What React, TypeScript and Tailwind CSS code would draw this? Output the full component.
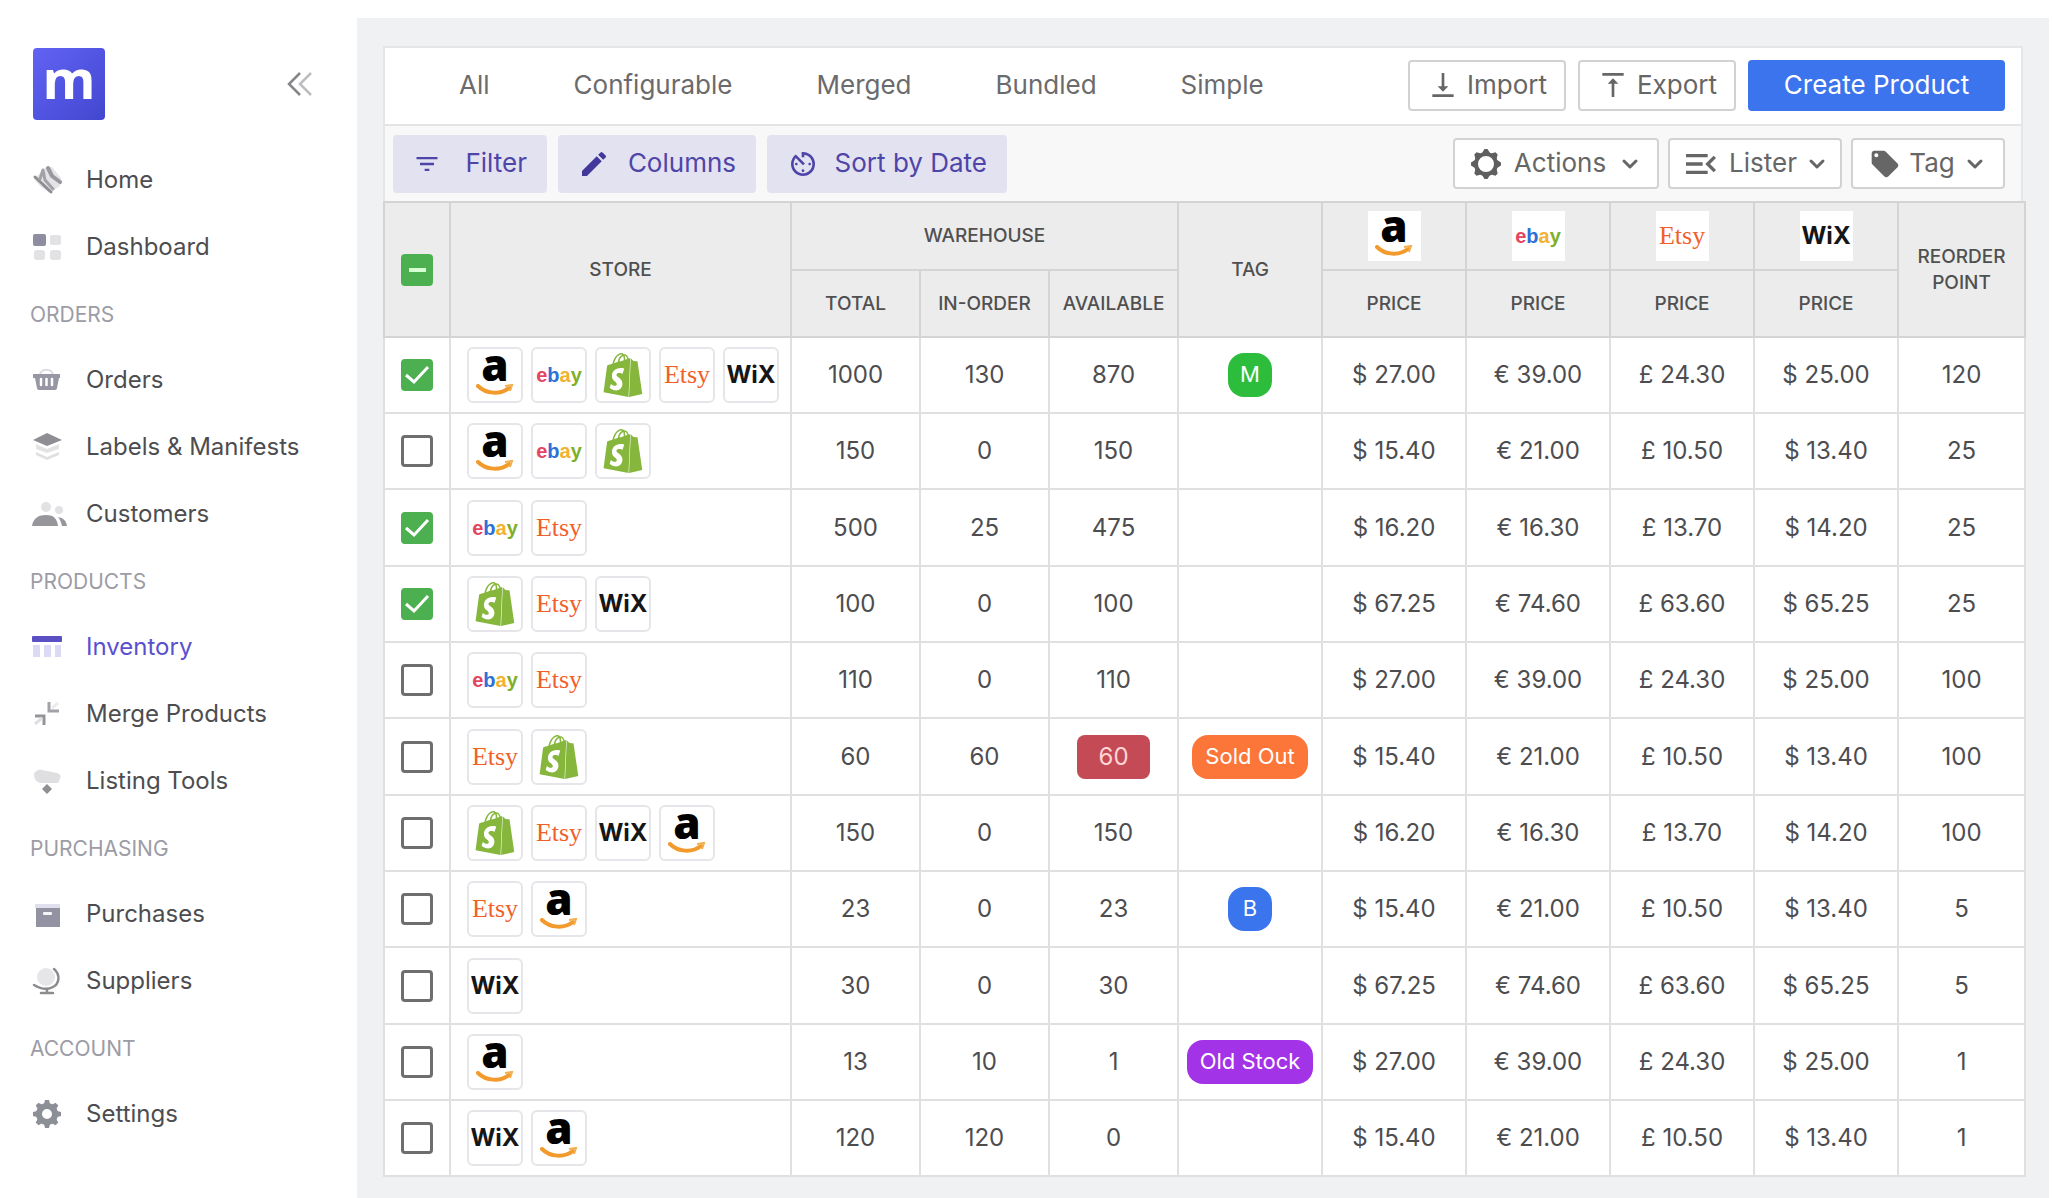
import React, { useEffect, useRef, useState } from "react";
import {
  MdAvTimer,
  MdEdit,
  MdFilterList,
  MdLocalOffer,
  MdMenuOpen,
  MdVerticalAlignBottom,
  MdVerticalAlignTop,
} from "react-icons/md";
import { SiShopify } from "react-icons/si";
import { ChevronDown } from "lucide-react";

type Store = "amazon" | "ebay" | "shopify" | "etsy" | "wix";

/* ---------- sidebar icons ---------- */

const HomeIcon = () => (
  <svg viewBox="0 0 30 30" className="size-[30px]" fill="none" aria-hidden="true">
    <path d="M13 3 20 2 29 13 28 21 18 28 9 22 2 14Z" fill="#e4e4e7" />
    <path d="M3 12 19 27" stroke="#8d8d92" strokeWidth="3" strokeLinecap="round" />
    <path d="M8 14 11 5 13 15 21 24" stroke="#a2a2a6" strokeWidth="3" strokeLinecap="round" strokeLinejoin="round" />
    <path d="M16 3 20 11 28 17" stroke="#98989d" strokeWidth="4" strokeLinecap="round" strokeLinejoin="round" />
  </svg>
);
const DashboardIcon = () => (
  <svg viewBox="0 0 30 30" className="size-[30px]" aria-hidden="true">
    <rect x="1" y="2" width="13" height="12" rx="2" fill="#8f8da0" />
    <rect x="18" y="3" width="11" height="10" rx="2" fill="#e2e2e5" />
    <rect x="2" y="18" width="11" height="10" rx="3" fill="#e2e2e5" />
    <rect x="18" y="18" width="11" height="10" rx="3" fill="#e2e2e5" />
  </svg>
);
const BasketIcon = () => (
  <svg viewBox="0 0 30 30" className="size-[30px]" fill="none" aria-hidden="true">
    <path d="M8 10C9 3 20 3 21 10" stroke="#dcdce3" strokeWidth="2" />
    <path d="M1 9h27v4h-1l-2 10a2 2 0 0 1-2 2H7a2 2 0 0 1-2-2L3 13H1Z" fill="#9797a3" />
    <path d="M9 14v6M14.500 14v6M20 14v6" stroke="#fff" strokeWidth="2.500" strokeLinecap="round" />
  </svg>
);
const LayersIcon = () => (
  <svg viewBox="0 0 30 30" className="size-[30px]" aria-hidden="true">
    <path d="M15 1 30 8 15 14 1 8Z" fill="#8e8e94" />
    <path d="M4 12 15 17 27 12V17L15 21 4 17Z" fill="#e3e3e6" />
    <path d="M4 20 15 25 27 20V23L15 28 4 23Z" fill="#e0e0e3" />
  </svg>
);
const PeopleIcon = () => (
  <svg viewBox="0 0 36 30" className="h-[30px] w-9" aria-hidden="true">
    <circle cx="14" cy="8" r="5" fill="#e2e2e5" />
    <circle cx="27" cy="11" r="4" fill="#e2e2e5" />
    <path d="M0 27C1 19 7 16 14 16S25 19 26 27Z" fill="#96969b" />
    <path d="M26 18C31 19 34 21 35 27H30C29 23 28 20 26 18Z" fill="#96969b" />
  </svg>
);
const InventoryIcon = () => (
  <svg viewBox="0 0 30 30" className="size-[30px]" aria-hidden="true">
    <rect x="0" y="4" width="30" height="6" rx="1" fill="#5b4fc4" />
    <path d="M1 13h7v12H1ZM12 13h7v12h-7ZM23 13h6v12h-6Z" fill="#dcd9f7" />
  </svg>
);
const MergeIcon = () => (
  <svg viewBox="0 0 30 30" className="size-[30px]" fill="none" aria-hidden="true">
    <path d="M3 17h9v9" stroke="#94949a" strokeWidth="3" />
    <path d="M3 25 10 19" stroke="#e0e0e3" strokeWidth="3" />
    <path d="M17 3v9h10" stroke="#a2a2a8" strokeWidth="3" />
    <path d="M26 4 20 9" stroke="#ececee" strokeWidth="3" />
  </svg>
);
const ListingIcon = () => (
  <svg viewBox="0 0 30 30" className="size-[30px]" aria-hidden="true">
    <path d="M2 9C2 5 7 3 10 4L25 7C29 8 29 11 28 13L26 17H9C5 17 2 13 2 9Z" fill="#dfdfe1" />
    <path d="M15 18 20 23 15 28 10 23Z" fill="#8f8f93" />
  </svg>
);
const BoxIcon = () => (
  <svg viewBox="0 0 30 30" className="size-[30px]" aria-hidden="true">
    <rect x="3" y="5" width="25" height="4" fill="#e0dfee" />
    <path d="M4 9h24v19H4Z" fill="#9392a3" />
    <rect x="11" y="13" width="9" height="3" rx="1" fill="#f4f4f8" />
  </svg>
);
const GlobeIcon = () => (
  <svg viewBox="0 0 30 30" className="size-[30px]" fill="none" aria-hidden="true">
    <circle cx="14" cy="11" r="9" fill="#e6e6e8" />
    <path d="M22 3C29 9 27 18 21 21C14 25 7 22 2 19" stroke="#8b8b90" strokeWidth="2.500" strokeLinecap="round" />
    <path d="M9 27h12M15 23v4" stroke="#8b8b90" strokeWidth="2.500" strokeLinecap="round" />
  </svg>
);
const GearIcon = () => (
  <svg viewBox="0 0 30 30" className="size-[30px]" fill="none" aria-hidden="true">
    <circle cx="15" cy="15" r="8" stroke="#8c8f96" strokeWidth="6" />
    <g fill="#8c8f96">
      {[0, 45, 90, 135, 180, 225, 270, 315].map((a) => (
        <path key={a} d="M12 5 13 1h4l1 4Z" transform={`rotate(${a} 15 15)`} />
      ))}
    </g>
  </svg>
);
const CogOutlineIcon = () => (
  <svg viewBox="0 0 32 32" className="size-8" fill="none" aria-hidden="true">
    <circle cx="16" cy="16" r="10" stroke="#5f5f5f" strokeWidth="4" />
    <g fill="#5f5f5f">
      {[0, 45, 90, 135, 180, 225, 270, 315].map((a) => (
        <path key={a} d="M12 5 14.500 1h3L20 5Z" transform={`rotate(${a} 16 16)`} />
      ))}
    </g>
  </svg>
);

/* ---------- marketplace marks ---------- */

function Mark({ store }: { store: Store }) {
  switch (store) {
    case "amazon":
      return (
        <span className="flex flex-col items-center" role="img" aria-label="Amazon">
          <span className="-mt-3 h-10 font-['Open_Sans',sans-serif] text-[44px] leading-10 font-extrabold text-black">a</span>
          <svg viewBox="0 0 38 11" className="h-[11px] w-[38px]" fill="none" aria-hidden="true">
            <path d="M2 2C10 10 24 11 33 4" stroke="#f39a2d" strokeWidth="4" strokeLinecap="round" />
            <path d="M29 2 36 1 34 7" stroke="#f3ae4d" strokeWidth="2" />
          </svg>
        </span>
      );
    case "ebay":
      return (
        <span className="font-['Liberation_Sans',sans-serif] text-xl leading-6 font-bold">
          <span className="text-[#e5455f]">e</span>
          <span className="text-[#2f6fd6]">b</span>
          <span className="text-[#f2b233]">a</span>
          <span className="text-[#7fb028]">y</span>
        </span>
      );
    case "shopify":
      return <SiShopify className="size-11 text-[#86b73c]" role="img" aria-label="Shopify" />;
    case "etsy":
      return <span className="font-['Liberation_Serif',serif] text-[26px] leading-7 text-[#f0602a]">Etsy</span>;
    case "wix":
      return <span className="font-['Inter',sans-serif] text-2xl leading-7 font-bold text-[#161616]">WiX</span>;
  }
}

/* ---------- data ---------- */

const groups: { title?: string; items: { label: string; icon: React.ReactNode; active?: boolean }[] }[] = [
  {
    items: [
      { label: "Home", icon: <HomeIcon /> },
      { label: "Dashboard", icon: <DashboardIcon /> },
    ],
  },
  {
    title: "ORDERS",
    items: [
      { label: "Orders", icon: <BasketIcon /> },
      { label: "Labels & Manifests", icon: <LayersIcon /> },
      { label: "Customers", icon: <PeopleIcon /> },
    ],
  },
  {
    title: "PRODUCTS",
    items: [
      { label: "Inventory", icon: <InventoryIcon />, active: true },
      { label: "Merge Products", icon: <MergeIcon /> },
      { label: "Listing Tools", icon: <ListingIcon /> },
    ],
  },
  {
    title: "PURCHASING",
    items: [
      { label: "Purchases", icon: <BoxIcon /> },
      { label: "Suppliers", icon: <GlobeIcon /> },
    ],
  },
  { title: "ACCOUNT", items: [{ label: "Settings", icon: <GearIcon /> }] },
];

const priceSets = [
  ["$ 27.00", "€ 39.00", "£ 24.30", "$ 25.00"],
  ["$ 15.40", "€ 21.00", "£ 10.50", "$ 13.40"],
  ["$ 16.20", "€ 16.30", "£ 13.70", "$ 14.20"],
  ["$ 67.25", "€ 74.60", "£ 63.60", "$ 65.25"],
];

type Row = {
  checked?: boolean;
  stores: Store[];
  total: number;
  inOrder: number;
  available: number;
  alert?: boolean;
  tag?: { text: string; style: string };
  prices: number;
  reorder: number;
};

const rows: Row[] = [
  { checked: true, stores: ["amazon", "ebay", "shopify", "etsy", "wix"], total: 1000, inOrder: 130, available: 870, tag: { text: "M", style: "w-11 bg-[#2cbd3d]" }, prices: 0, reorder: 120 },
  { stores: ["amazon", "ebay", "shopify"], total: 150, inOrder: 0, available: 150, prices: 1, reorder: 25 },
  { checked: true, stores: ["ebay", "etsy"], total: 500, inOrder: 25, available: 475, prices: 2, reorder: 25 },
  { checked: true, stores: ["shopify", "etsy", "wix"], total: 100, inOrder: 0, available: 100, prices: 3, reorder: 25 },
  { stores: ["ebay", "etsy"], total: 110, inOrder: 0, available: 110, prices: 0, reorder: 100 },
  { stores: ["etsy", "shopify"], total: 60, inOrder: 60, available: 60, alert: true, tag: { text: "Sold Out", style: "w-[116px] bg-[#fc763a]" }, prices: 1, reorder: 100 },
  { stores: ["shopify", "etsy", "wix", "amazon"], total: 150, inOrder: 0, available: 150, prices: 2, reorder: 100 },
  { stores: ["etsy", "amazon"], total: 23, inOrder: 0, available: 23, tag: { text: "B", style: "w-11 bg-[#3a75ee]" }, prices: 1, reorder: 5 },
  { stores: ["wix"], total: 30, inOrder: 0, available: 30, prices: 3, reorder: 5 },
  { stores: ["amazon"], total: 13, inOrder: 10, available: 1, tag: { text: "Old Stock", style: "w-[126px] bg-[#a333e6]" }, prices: 0, reorder: 1 },
  { stores: ["wix", "amazon"], total: 120, inOrder: 120, available: 0, prices: 1, reorder: 1 },
];

/* ---------- controls ---------- */

function Check({ label, checked, mixed, onChange }: { label: string; checked: boolean; mixed?: boolean; onChange: () => void }) {
  const ref = useRef<HTMLInputElement>(null);
  useEffect(() => {
    if (ref.current) ref.current.indeterminate = !!mixed;
  }, [mixed]);
  return (
    <label className="mx-auto grid size-8 place-items-center">
      <input
        ref={ref}
        type="checkbox"
        aria-label={label}
        checked={checked}
        onChange={onChange}
        className="col-start-1 row-start-1 size-8 appearance-none rounded border-3 border-[#6e6e6e] bg-white checked:border-[#4caf50] checked:bg-[#4caf50] indeterminate:border-[#4caf50] indeterminate:bg-[#4caf50]"
      />
      {(checked || mixed) && (
        <svg viewBox="0 0 32 32" className="pointer-events-none col-start-1 row-start-1 size-8" fill="none" stroke="#fff" aria-hidden="true">
          {mixed ? <path d="M8 16h17" stroke="#d6ffd2" strokeWidth="4" /> : <path d="M5 16 13 23 27 8" strokeWidth="3" />}
        </svg>
      )}
    </label>
  );
}

const outline =
  "flex h-[51px] items-center justify-center rounded border-2 border-[#d2d2d2] bg-white text-[#666]";
const soft = "flex h-[58px] items-center justify-between rounded bg-[#e2e2f1] px-5 text-[#4f45a8]";

export default function App() {
  const [picked, setPicked] = useState(rows.map((r) => !!r.checked));
  const all = picked.every(Boolean);
  const some = picked.some(Boolean);
  const th = "border-2 border-[#d4d4d4] text-[19px] leading-[26px] font-medium";
  const td = "border-2 border-[#e0e0e0]";

  return (
    <div className="flex min-h-screen bg-white font-['Inter',sans-serif] text-2xl text-[#4d4d50]">
      <aside className="w-[357px] shrink-0">
        <div className="flex items-center justify-between pt-12 pr-[44px] pb-[26px] pl-[33px]">
          <div className="flex size-[72px] items-center justify-center rounded bg-linear-to-br from-[#6262f4] to-[#4247cf]">
            <span className="-mt-3 font-['Open_Sans',sans-serif] text-[54px] leading-[60px] font-bold text-white">m</span>
          </div>
          <button type="button" aria-label="Collapse sidebar">
            <svg viewBox="0 0 26 26" className="size-[26px]" fill="none" strokeWidth="2.500" aria-hidden="true">
              <path d="M13 2 2 13 13 24" stroke="#85858a" />
              <path d="M24 2 13 13 24 24" stroke="#bdbdc1" />
            </svg>
          </button>
        </div>
        <nav>
          {groups.map((g, i) => (
            <div key={i}>
              {g.title && <h2 className="flex h-[66px] items-center pt-1 pl-[30px] text-[21px] text-[#9c9ca5]">{g.title}</h2>}
              {g.items.map((it) => (
                <a
                  key={it.label}
                  href={`#${it.label}`}
                  aria-current={it.active ? "page" : undefined}
                  className={`flex h-[67px] items-center pl-8 whitespace-nowrap ${it.active ? "text-[#5a50cf]" : ""}`}
                >
                  <span className="flex w-[54px] shrink-0">{it.icon}</span>
                  {it.label}
                </a>
              ))}
            </div>
          ))}
        </nav>
      </aside>

      <main className="mt-[18px] mr-[3px] min-w-0 flex-1 bg-[#eff1f3] px-[26px] pt-7">
        <section className="border-x-2 border-t-2 border-[#e4e6e8] bg-white text-[26px]">
          <div className="flex h-[78px] items-center justify-between border-b-2 border-[#e4e4e4] pr-4 pb-[2px] pl-[74px]">
            <div className="flex gap-[84px] text-[#6b6b6d]">
              {["All", "Configurable", "Merged", "Bundled", "Simple"].map((t) => (
                <button key={t} type="button">
                  {t}
                </button>
              ))}
            </div>
            <div className="flex gap-3">
              <button type="button" className={`${outline} w-[158px] gap-2`}>
                <MdVerticalAlignBottom className="size-8" />
                Import
              </button>
              <button type="button" className={`${outline} w-[158px] gap-2`}>
                <MdVerticalAlignTop className="size-8" />
                Export
              </button>
              <button type="button" className="h-[51px] w-[257px] rounded bg-[#3b74ec] text-white">
                Create Product
              </button>
            </div>
          </div>
          <div className="flex h-[75px] items-center justify-between bg-[#f8f8f9] pr-4 pl-2">
            <div className="flex gap-[11px]">
              <button type="button" className={`${soft} w-[154px]`}>
                <MdFilterList className="size-7" />
                Filter
              </button>
              <button type="button" className={`${soft} w-[198px]`}>
                <MdEdit className="size-8 text-[#42389c]" />
                Columns
              </button>
              <button type="button" className={`${soft} w-[240px]`}>
                <MdAvTimer className="size-8" />
                Sort by Date
              </button>
            </div>
            <div className="flex gap-[9px]">
              <button type="button" aria-haspopup="menu" className={`${outline} w-[206px] gap-3`}>
                <CogOutlineIcon />
                Actions
                <ChevronDown className="size-6" strokeWidth={3} />
              </button>
              <button type="button" aria-haspopup="menu" className={`${outline} w-[174px] gap-2`}>
                <MdMenuOpen className="size-10" />
                Lister
                <ChevronDown className="size-6" strokeWidth={3} />
              </button>
              <button type="button" aria-haspopup="menu" className={`${outline} w-[154px] gap-2`}>
                <MdLocalOffer className="size-8" />
                Tag
                <ChevronDown className="size-6" strokeWidth={3} />
              </button>
            </div>
          </div>
        </section>

        <table className="w-full table-fixed border-collapse bg-white text-center">
          <colgroup>
            <col className="w-[66px]" />
            <col className="w-[341px]" />
            <col className="w-[129px]" />
            <col className="w-[129px]" />
            <col className="w-[129px]" />
            <col className="w-[144px]" />
            <col className="w-[144px]" />
            <col className="w-[144px]" />
            <col className="w-[144px]" />
            <col className="w-[144px]" />
            <col className="w-[127px]" />
          </colgroup>
          <thead className="bg-[#ececec] text-[#505050]">
            <tr className="h-[68px]">
              <th rowSpan={2} className={th}>
                <Check
                  label="Select all products"
                  checked={all}
                  mixed={some && !all}
                  onChange={() => setPicked(picked.map(() => !all))}
                />
              </th>
              <th rowSpan={2} className={th}>STORE</th>
              <th colSpan={3} className={th}>WAREHOUSE</th>
              <th rowSpan={2} className={th}>TAG</th>
              {(["amazon", "ebay", "etsy", "wix"] as Store[]).map((s) => (
                <th key={s} className={th}>
                  <div className="mx-auto flex h-[50px] w-[53px] items-center justify-center bg-white">
                    <Mark store={s} />
                  </div>
                </th>
              ))}
              <th rowSpan={2} className={th}>
                REORDER
                <br />
                POINT
              </th>
            </tr>
            <tr className="h-[67px]">
              {["TOTAL", "IN-ORDER", "AVAILABLE", "PRICE", "PRICE", "PRICE", "PRICE"].map((h, i) => (
                <th key={i} className={th}>{h}</th>
              ))}
            </tr>
          </thead>
          <tbody>
            {rows.map((r, i) => (
              <tr key={i} className="h-[76px] nth-[3n]:h-[77px]">
                <td className={td}>
                  <Check
                    label={`Select product ${i + 1}`}
                    checked={picked[i]}
                    onChange={() => setPicked(picked.map((p, j) => (j === i ? !p : p)))}
                  />
                </td>
                <td className={td}>
                  <div className="flex gap-2 pl-4">
                    {r.stores.map((s) => (
                      <span key={s} className="flex size-14 items-center justify-center rounded-md border-2 border-[#e6e6ea]">
                        <Mark store={s} />
                      </span>
                    ))}
                  </div>
                </td>
                <td className={td}>{r.total}</td>
                <td className={td}>{r.inOrder}</td>
                <td className={td}>
                  {r.alert ? (
                    <span className="mx-auto flex h-11 w-[73px] items-center justify-center rounded-lg bg-[#c44a55] text-[#ffd5d5]">
                      {r.available}
                    </span>
                  ) : (
                    r.available
                  )}
                </td>
                <td className={td}>
                  {r.tag && (
                    <span className={`mx-auto flex h-11 items-center justify-center rounded-2xl text-[22px] whitespace-nowrap text-white ${r.tag.style}`}>
                      {r.tag.text}
                    </span>
                  )}
                </td>
                {priceSets[r.prices].map((p, j) => (
                  <td key={j} className={td}>{p}</td>
                ))}
                <td className={td}>{r.reorder}</td>
              </tr>
            ))}
          </tbody>
        </table>
      </main>
    </div>
  );
}
